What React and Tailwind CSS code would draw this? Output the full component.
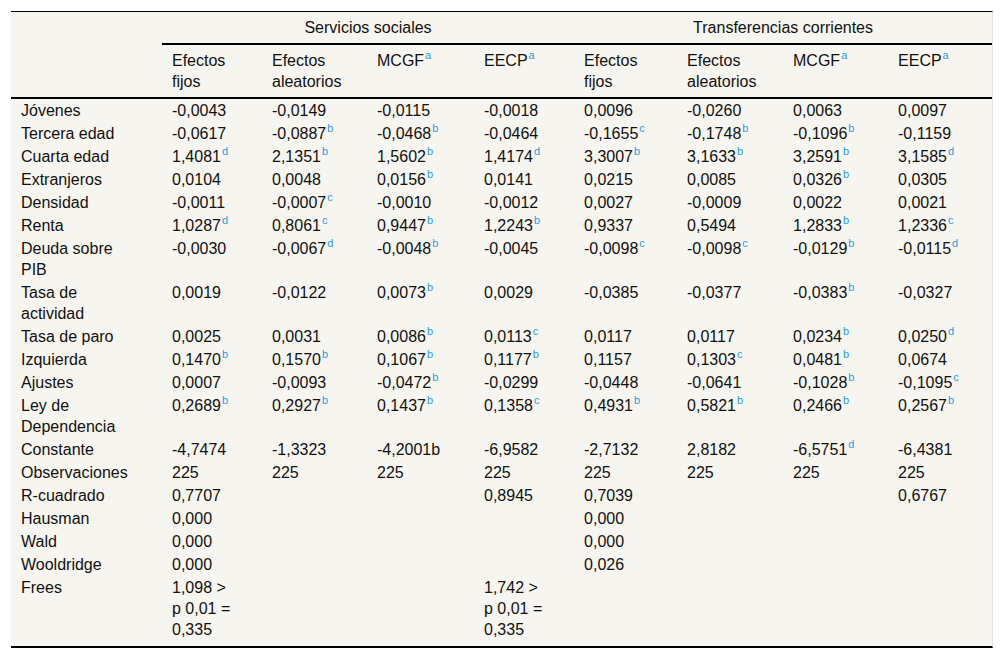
import React from "react";

const rows = [
  ["Jóvenes", ["-0,0043"], ["-0,0149"], ["-0,0115"], ["-0,0018"], ["0,0096"], ["-0,0260"], ["0,0063"], ["0,0097"]],
  ["Tercera edad", ["-0,0617"], ["-0,0887", "b"], ["-0,0468", "b"], ["-0,0464"], ["-0,1655", "c"], ["-0,1748", "b"], ["-0,1096", "b"], ["-0,1159"]],
  ["Cuarta edad", ["1,4081", "d"], ["2,1351", "b"], ["1,5602", "b"], ["1,4174", "d"], ["3,3007", "b"], ["3,1633", "b"], ["3,2591", "b"], ["3,1585", "d"]],
  ["Extranjeros", ["0,0104"], ["0,0048"], ["0,0156", "b"], ["0,0141"], ["0,0215"], ["0,0085"], ["0,0326", "b"], ["0,0305"]],
  ["Densidad", ["-0,0011"], ["-0,0007", "c"], ["-0,0010"], ["-0,0012"], ["0,0027"], ["-0,0009"], ["0,0022"], ["0,0021"]],
  ["Renta", ["1,0287", "d"], ["0,8061", "c"], ["0,9447", "b"], ["1,2243", "b"], ["0,9337"], ["0,5494"], ["1,2833", "b"], ["1,2336", "c"]],
  [["Deuda sobre", "PIB"], ["-0,0030"], ["-0,0067", "d"], ["-0,0048", "b"], ["-0,0045"], ["-0,0098", "c"], ["-0,0098", "c"], ["-0,0129", "b"], ["-0,0115", "d"]],
  [["Tasa de", "actividad"], ["0,0019"], ["-0,0122"], ["0,0073", "b"], ["0,0029"], ["-0,0385"], ["-0,0377"], ["-0,0383", "b"], ["-0,0327"]],
  ["Tasa de paro", ["0,0025"], ["0,0031"], ["0,0086", "b"], ["0,0113", "c"], ["0,0117"], ["0,0117"], ["0,0234", "b"], ["0,0250", "d"]],
  ["Izquierda", ["0,1470", "b"], ["0,1570", "b"], ["0,1067", "b"], ["0,1177", "b"], ["0,1157"], ["0,1303", "c"], ["0,0481", "b"], ["0,0674"]],
  ["Ajustes", ["0,0007"], ["-0,0093"], ["-0,0472", "b"], ["-0,0299"], ["-0,0448"], ["-0,0641"], ["-0,1028", "b"], ["-0,1095", "c"]],
  [["Ley de", "Dependencia"], ["0,2689", "b"], ["0,2927", "b"], ["0,1437", "b"], ["0,1358", "c"], ["0,4931", "b"], ["0,5821", "b"], ["0,2466", "b"], ["0,2567", "b"]],
  ["Constante", ["-4,7474"], ["-1,3323"], ["-4,2001b"], ["-6,9582"], ["-2,7132"], ["2,8182"], ["-6,5751", "d"], ["-6,4381"]],
  ["Observaciones", ["225"], ["225"], ["225"], ["225"], ["225"], ["225"], ["225"], ["225"]],
  ["R-cuadrado", ["0,7707"], [""], [""], ["0,8945"], ["0,7039"], [""], [""], ["0,6767"]],
  ["Hausman", ["0,000"], [""], [""], [""], ["0,000"], [""], [""], [""]],
  ["Wald", ["0,000"], [""], [""], [""], ["0,000"], [""], [""], [""]],
  ["Wooldridge", ["0,000"], [""], [""], [""], ["0,026"], [""], [""], [""]],
  ["Frees", [["1,098 >", "p 0,01 =", "0,335"]], [""], [""], [["1,742 >", "p 0,01 =", "0,335"]], [""], [""], [""], [""]],
];

function Sup({ children }) {
  return (
    <span className="relative top-[-7px] ml-[1px] text-[11px] leading-none text-[#2f9bdb]">
      {children}
    </span>
  );
}

function Lines({ value }) {
  if (Array.isArray(value)) {
    return value.map((l, i) => (
      <React.Fragment key={i}>
        {i > 0 && <br />}
        {l}
      </React.Fragment>
    ));
  }
  return value;
}

export default function App() {
  return (
    <div
      className="bg-white p-[11px] text-[16px] leading-[21px] text-[#111]"
      style={{ fontFamily: '"Liberation Sans", Arial, sans-serif' }}
    >
      <div className="border-t border-b-2 border-black border-r border-r-[#e4e2dd] bg-[#f7f5ef]">
        <table className="w-full table-fixed border-separate border-spacing-0">
          <colgroup>
            <col className="w-[151px]" />
            <col className="w-[100px]" />
            <col className="w-[105px]" />
            <col className="w-[107px]" />
            <col className="w-[100px]" />
            <col className="w-[103px]" />
            <col className="w-[106px]" />
            <col className="w-[105px]" />
            <col className="w-[104px]" />
          </colgroup>
          <thead>
            <tr>
              <th rowSpan={2} className="border-b-2 border-black"></th>
              <th colSpan={4} className="border-b-2 border-black px-[10px] py-[5px] text-center font-normal">
                Servicios sociales
              </th>
              <th colSpan={4} className="border-b-2 border-black px-[10px] py-[5px] text-center font-normal">
                Transferencias corrientes
              </th>
            </tr>
            <tr>
              {[
                ["Efectos", "fijos"],
                ["Efectos", "aleatorios"],
                "MCGF",
                "EECP",
                ["Efectos", "fijos"],
                ["Efectos", "aleatorios"],
                "MCGF",
                "EECP",
              ].map((h, i) => (
                <th
                  key={i}
                  className="border-b-2 border-black px-[10px] py-[5px] text-left align-top font-normal whitespace-nowrap"
                >
                  <Lines value={h} />
                  {!Array.isArray(h) && <Sup>a</Sup>}
                </th>
              ))}
            </tr>
          </thead>
          <tbody>
            {rows.map((r, ri) => {
              const last = ri === rows.length - 1;
              const pad = last ? "pt-[1px] pb-[6px]" : "py-[1px]";
              return (
                <tr key={ri}>
                  <td className={`px-[10px] ${pad} align-top whitespace-nowrap`}>
                    <Lines value={r[0]} />
                  </td>
                  {r.slice(1).map((c, ci) => (
                    <td key={ci} className={`px-[10px] ${pad} align-top whitespace-nowrap`}>
                      <Lines value={c[0]} />
                      {c[1] && <Sup>{c[1]}</Sup>}
                    </td>
                  ))}
                </tr>
              );
            })}
          </tbody>
        </table>
      </div>
    </div>
  );
}
